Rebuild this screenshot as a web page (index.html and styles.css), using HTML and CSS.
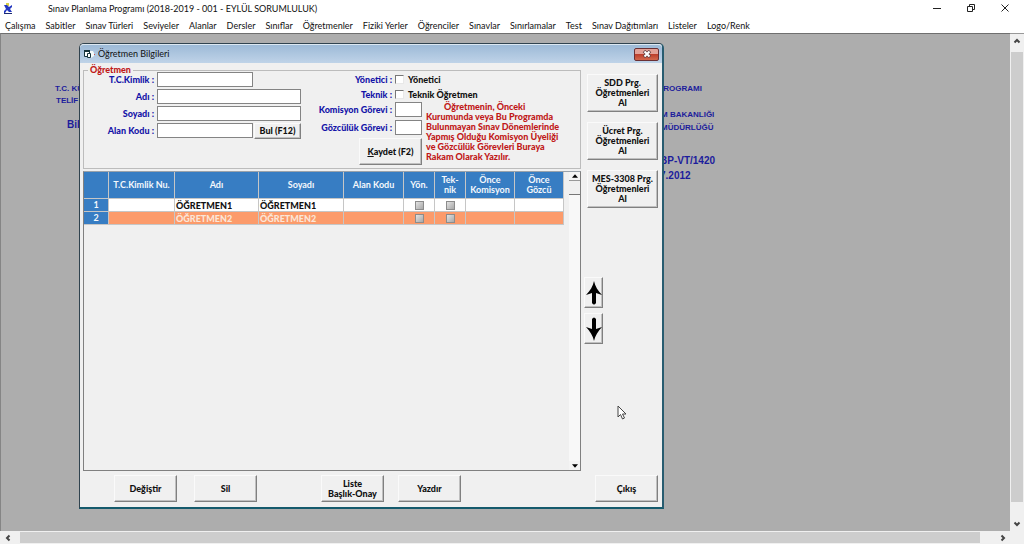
FILE: index.html
```html
<!DOCTYPE html>
<html lang="tr">
<head>
<meta charset="utf-8">
<title>Sınav Planlama Programı</title>
<link rel="stylesheet" href="styles.css">
</head>
<body>
<header class="titlebar">
  <svg class="app-icon" viewBox="0 0 10 12" aria-hidden="true"><path d="M3 0h3v3H3z" fill="#d8cf45"/><path d="M1 2h3l2 2 3-2v2L7 6l2 3H6L4 7 2 10H1V8l2-2z" fill="#2438c0"/><path d="M1 10h8v1H1z" fill="#1b2a70"/></svg>
  <h1 class="app-title">Sınav Planlama Programı (2018-2019 - 001 - EYLÜL SORUMLULUK)</h1>
  <div class="window-controls">
    <button aria-label="Simge durumuna küçült"><svg viewBox="0 0 10 10"><path d="M1 5.5h8"/></svg></button>
    <button aria-label="Önceki boyut"><svg viewBox="0 0 10 10"><path d="M1.5 3.5h5v5h-5zM3.5 3V1.5h5v5H7"/></svg></button>
    <button aria-label="Kapat"><svg viewBox="0 0 10 10"><path d="M1.5 1.5l7 7M8.500 1.500l-7 7"/></svg></button>
  </div>
</header>
<nav class="menu">
  <button>Çalışma</button><button>Sabitler</button><button>Sınav Türleri</button><button>Seviyeler</button><button>Alanlar</button><button>Dersler</button><button>Sınıflar</button><button>Öğretmenler</button><button>Fiziki Yerler</button><button>Öğrenciler</button><button>Sınavlar</button><button>Sınırlamalar</button><button>Test</button><button>Sınav Dağıtımları</button><button>Listeler</button><button>Logo/Renk</button>
</nav>
<main class="workspace">
  <div class="desktop">
    <p class="notice notice-culture">T.C. KÜ</p>
    <p class="notice notice-copyright">TELİF</p>
    <p class="notice notice-info">Bil</p>
    <p class="notice notice-program">PROGRAMI</p>
    <p class="notice notice-ministry">M BAKANLIĞI</p>
    <p class="notice notice-office">MÜDÜRLÜĞÜ</p>
    <p class="notice notice-code">BP-VT/1420</p>
    <p class="notice notice-date">7.2012</p>

    <section class="dialog" aria-labelledby="dialog-title">
      <header class="dialog-bar">
        <svg class="form-icon" viewBox="0 0 12 10" aria-hidden="true"><path d="M6 2l4 0 1 2v3l-3 2z" fill="#f4fafa"/><path d="M1.500 1.500h5v6h-5z" fill="#fff" stroke="#17343c"/><path d="M1 1h6v2H1z" fill="#17343c"/><path d="M4.500 4.500h3v4h-3z" fill="#fff" stroke="#17343c"/><path d="M11 5h1v1h-1z" fill="#c55"/></svg>
        <h2 class="dialog-title" id="dialog-title">Öğretmen Bilgileri</h2>
        <button class="dialog-close" aria-label="Kapat"><svg viewBox="0 0 10 8"><path d="M2 1l6 6M8 1L2 7" stroke="#644" stroke-width="3.500"/><path d="M2.500 1.500l5 5M7.500 1.500l-5 5" stroke="#fff" stroke-width="2"/></svg></button>
      </header>
      <div class="dialog-body">
        <div class="main-column">
          <fieldset class="teacher">
            <legend>Öğretmen</legend>
            <div class="identity">
              <label for="tc">T.C.Kimlik :</label><input class="text short" id="tc" type="text">
              <label for="adi">Adı :</label><input class="text" id="adi" type="text">
              <label for="soyadi">Soyadı :</label><input class="text" id="soyadi" type="text">
              <label for="alan">Alan Kodu :</label>
              <div class="lookup"><input class="text short" id="alan" type="text"><button class="raised find">Bul (F12)</button></div>
            </div>
            <div class="duties">
              <div class="flags">
                <span>Yönetici :</span><label class="flag"><input class="tick" type="checkbox">Yönetici</label>
                <span>Teknik :</span><label class="flag"><input class="tick" type="checkbox">Teknik Öğretmen</label>
              </div>
              <div class="tasks">
                <div class="task-fields">
                  <label for="komisyon">Komisyon Görevi :</label><input class="text tiny" id="komisyon" type="text">
                  <label for="gozcu">Gözcülük Görevi :</label><input class="text tiny" id="gozcu" type="text">
                  <button class="raised save"><span><u>K</u>aydet (F2)</span></button>
                </div>
                <p class="hint">Öğretmenin, Önceki<br>Kurumunda veya Bu Programda<br>Bulunmayan Sınav Dönemlerinde<br>Yapmış Olduğu Komisyon Üyeliği<br>ve Gözcülük Görevleri Buraya<br>Rakam Olarak Yazılır.</p>
              </div>
            </div>
          </fieldset>
          <div class="list">
            <div class="list-area">
              <table class="grid">
                <colgroup><col class="c-no"><col class="c-id"><col class="c-name"><col class="c-surname"><col class="c-code"><col class="c-tick"><col class="c-tick"><col class="c-past"><col class="c-past"></colgroup>
                <thead><tr><th></th><th>T.C.Kimlik Nu.</th><th>Adı</th><th>Soyadı</th><th>Alan Kodu</th><th>Yön.</th><th>Tek-<br>nik</th><th>Önce<br>Komisyon</th><th>Önce<br>Gözcü</th></tr></thead>
                <tbody>
                  <tr><th>1</th><td></td><td>ÖĞRETMEN1</td><td>ÖĞRETMEN1</td><td></td><td><input class="cell-tick" type="checkbox" aria-label="Yönetici"></td><td><input class="cell-tick" type="checkbox" aria-label="Teknik"></td><td></td><td></td></tr>
                  <tr class="selected"><th>2</th><td></td><td>ÖĞRETMEN2</td><td>ÖĞRETMEN2</td><td></td><td><input class="cell-tick" type="checkbox" aria-label="Yönetici"></td><td><input class="cell-tick" type="checkbox" aria-label="Teknik"></td><td></td><td></td></tr>
                </tbody>
              </table>
            </div>
            <div class="list-scroll">
              <button aria-label="Yukarı"><svg viewBox="0 0 7 4"><path d="M0 4l3.500-4L7 4z"/></svg></button>
              <div class="list-thumb"></div>
              <button class="list-down" aria-label="Aşağı"><svg viewBox="0 0 7 4"><path d="M0 0l3.500 4L7 0z"/></svg></button>
            </div>
          </div>
        </div>
        <aside class="side-column">
          <div class="imports">
            <button class="raised">SDD Prg.<br>Öğretmenleri<br>Al</button>
            <button class="raised">Ücret Prg.<br>Öğretmenleri<br>Al</button>
            <button class="raised">MES-3308 Prg.<br>Öğretmenleri<br>Al</button>
          </div>
          <div class="movers">
            <button class="raised" aria-label="Yukarı taşı"><svg viewBox="0 0 16 24"><path d="M8 0C9 5 12 10 16 14L10 12V22Q8 25 6 22V12L0 14C4 10 7 5 8 0z"/></svg></button>
            <button class="raised" aria-label="Aşağı taşı"><svg viewBox="0 0 16 24"><path d="M8 24C9 19 12 14 16 10L10 12V2Q8-1 6 2V12L0 10C4 14 7 19 8 24z"/></svg></button>
          </div>
        </aside>
      </div>
      <footer class="actions">
        <button class="raised">Değiştir</button>
        <button class="raised">Sil</button>
        <button class="raised report">Liste<br>Başlık-Onay</button>
        <button class="raised print">Yazdır</button>
        <button class="raised exit">Çıkış</button>
      </footer>
    </section>
    <svg class="pointer" viewBox="0 0 10 15" aria-hidden="true"><path d="M1 1v11l2.500-2.500L5.500 14l2-1L5.500 9H9z" fill="#fff" stroke="#444"/></svg>
  </div>
  <div class="vscroll">
    <button aria-label="Yukarı kaydır"><svg viewBox="0 0 8 8"><path d="M1.500 5.500L4 3l2.500 2.500"/></svg></button>
    <div class="vthumb"></div>
    <button aria-label="Aşağı kaydır"><svg viewBox="0 0 8 8"><path d="M1.500 2.500L4 5l2.500-2.500"/></svg></button>
  </div>
</main>
<div class="hscroll">
  <button aria-label="Sola kaydır"><svg viewBox="0 0 8 8"><path d="M5.500 1.500L3 4l2.500 2.500"/></svg></button>
  <div class="hthumb"></div>
  <button aria-label="Sağa kaydır"><svg viewBox="0 0 8 8"><path d="M2.500 1.500L5 4 2.500 6.500"/></svg></button>
</div>
</body>
</html>
```
FILE: styles.css
```css
* { box-sizing: border-box; }
body {
  margin: 0;
  height: 100vh;
  display: flex;
  flex-direction: column;
  overflow: hidden;
  background: #fff;
  color: #111;
  font-family: Lato, "Open Sans", sans-serif;
  font-size: 9px;
}
button, input { margin: 0; padding: 0; font: inherit; color: inherit; border-radius: 0; }
button { border: 0; background: none; }
h1, h2, p { margin: 0; }
h1, h2 { font-weight: 400; }
svg { display: block; }

.titlebar { display: flex; align-items: center; height: 17px; }
.app-icon { width: 10px; height: 12px; margin-left: 3px; }
.app-title { margin-left: 35px; font-size: 9px; line-height: 17px; }
.window-controls { display: flex; margin: 0 2px 2px auto; }
.window-controls button { width: 34px; height: 15px; display: grid; place-items: center; }
.window-controls svg { width: 10px; height: 10px; fill: none; stroke: #222; }

.menu { display: flex; gap: 10px; height: 16px; padding-left: 5px; }
.menu button { line-height: 15px; white-space: nowrap; }

.workspace { flex: 1; min-height: 0; display: flex; }
.desktop {
  position: relative;
  flex: 1;
  overflow: hidden;
  background: #adadad;
  border-top: 1px solid #6f6f6f;
  border-left: 1px solid #858585;
}
.notice {
  position: absolute;
  color: #1c1c9c;
  font: bold 8px/12px "Liberation Sans", Arial, sans-serif;
  white-space: nowrap;
}
.notice-culture { left: 54px; top: 49px; }
.notice-copyright { left: 55px; top: 61px; }
.notice-info { left: 66px; top: 85px; font-size: 10px; }
.notice-program { left: 657px; top: 49px; }
.notice-ministry { left: 660px; top: 75px; }
.notice-office { left: 660px; top: 88px; }
.notice-code { left: 659px; top: 121px; font-size: 10px; }
.notice-date { left: 659px; top: 136px; font-size: 10px; }

.dialog {
  position: absolute;
  left: 78px;
  top: 9px;
  width: 585px;
  display: flex;
  flex-direction: column;
  border: 1px solid #30434f;
  border-right: 2px solid #285c70;
  border-bottom: 2px solid #155a6c;
  border-radius: 5px 5px 0 0;
  background: #f0f0f0;
  font-family: Lato, "Open Sans", sans-serif;
  font-weight: 900;
  line-height: 10px;
}
.dialog-bar {
  display: flex;
  align-items: center;
  height: 19px;
  padding: 0 3px;
  border-top: 1px solid #dce8f2;
  border-radius: 4px 4px 0 0;
  background: linear-gradient(#9dbad7, #bfd3e8);
}
.form-icon { width: 12px; height: 10px; }
.dialog-title { margin-left: 3px; font: 9px/16px Lato, "Open Sans", sans-serif; }
.dialog-close {
  margin-left: auto;
  width: 25px;
  height: 13px;
  display: grid;
  place-items: center;
  border: 1px solid #6a3034;
  border-radius: 2px;
  background: linear-gradient(#e3a197 45%, #bd3f2c 50%, #d2684c);
}
.dialog-close svg { width: 10px; height: 8px; fill: none; }

.dialog-body { display: flex; padding: 3px 3px 0; }
.main-column { width: 498px; }

.teacher {
  margin: 0;
  padding: 0 0 0 2px;
  min-width: 0;
  height: 103px;
  display: flex;
  border: 1px solid #bcbcbc;
  color: #1414a8;
}
.teacher legend { margin-left: 2px; padding: 0 2px; height: 8px; line-height: 8px; color: #c01818; }
.identity {
  display: grid;
  grid-template-columns: 68px 144px;
  grid-template-rows: repeat(3, 15px) 16px;
  gap: 2px 3px;
  align-content: start;
  align-items: center;
  margin-top: -2px;
}
.identity label { text-align: right; }
.text { width: 100%; height: 15px; border: 1px solid #848484; background: #fff; padding: 0 2px; }
.short { width: 96px; }
.tiny { width: 27px; }
.lookup { display: flex; gap: 1px; }
.raised {
  border: 1px solid;
  border-color: #fafafa #808080 #808080 #fafafa;
  box-shadow: inset -1px -1px #c0c0c0;
  background: #f0f0f0;
  color: #111;
  text-align: center;
  line-height: 10px;
}
.find { width: 47px; height: 16px; white-space: nowrap; }
.duties { display: flex; flex-direction: column; margin: -2px 0 0 9px; }
.flags {
  display: grid;
  grid-template-columns: 82px auto;
  gap: 0 3px;
  line-height: 15px;
}
.flags span { text-align: right; }
.flag { display: flex; align-items: center; gap: 4px; color: #111; }
.tick {
  appearance: none;
  width: 9px;
  height: 9px;
  border: 1px solid;
  border-color: #777 #e8e8e8 #e8e8e8 #777;
  background: #fff;
}
.tasks { display: flex; }
.task-fields {
  display: grid;
  grid-template-columns: 82px 27px;
  grid-template-rows: 15px 15px 27px;
  gap: 3px;
  align-items: center;
  white-space: nowrap;
}
.task-fields label { text-align: right; }
.save { grid-column: 1 / 3; justify-self: end; width: 63px; height: 27px; }
.hint { margin-left: 4px; color: #c01818; text-indent: 18px; white-space: nowrap; }

.list {
  display: flex;
  height: 300px;
  margin-top: 2px;
  border: 1px solid #808080;
  border-top-color: #9aa2aa;
}
.list-area { flex: 1; }
.grid { border-collapse: separate; border-spacing: 0; table-layout: fixed; width: 480px; }
.c-no { width: 25px; }
.c-id { width: 66px; }
.c-name { width: 84px; }
.c-surname { width: 85px; }
.c-code { width: 60px; }
.c-tick { width: 31px; }
.c-past { width: 49px; }
.grid th, .grid td { padding: 0; border-right: 1px solid #c6c6c6; border-bottom: 1px solid #c6c6c6; overflow: hidden; white-space: nowrap; }
.grid th { background: #377dc3; color: #f4f8fc; line-height: 10px; }
.grid thead th { height: 27px; }
.grid tbody tr { height: 13px; }
.grid td { background: #fff; line-height: 11px; padding-left: 1px; }
.grid .selected td { background: #fc9b6b; color: #fbe6d8; }
.cell-tick {
  appearance: none;
  display: block;
  width: 9px;
  height: 9px;
  margin: 0 auto;
  border: 1px solid #8c8c8c;
  background: linear-gradient(135deg, #e2e2e2, #a8a8a8);
}
.list-scroll { width: 11px; display: flex; flex-direction: column; background: #f8f8f8; }
.list-scroll button { height: 9px; display: grid; place-items: center; background: #f4f4f4; border-bottom: 1px solid #999; }
.list-scroll svg { width: 6px; height: 4px; }
.list-thumb { height: 14px; background: #f0f0f0; border-bottom: 1px solid #777; }
.list-scroll .list-down { margin-top: auto; border: 0; }

.side-column { flex: 1; padding: 8px 0 0 3px; }
.imports { display: flex; flex-direction: column; gap: 10px; padding-left: 3px; }
.imports .raised { width: 71px; height: 38px; white-space: nowrap; }
.movers { display: flex; flex-direction: column; gap: 5px; margin-top: 69px; }
.movers .raised { width: 19px; height: 31px; display: grid; place-items: center; }
.movers svg { width: 16px; height: 24px; }

.actions { display: flex; gap: 17px; padding: 4px 4px 5px 34px; }
.actions .raised { width: 63px; height: 27px; white-space: nowrap; }
.actions .report { margin-left: 47px; }
.actions .print { margin-left: -3px; }
.actions .exit { margin-left: auto; }

.pointer { position: absolute; left: 616px; top: 371px; width: 10px; height: 15px; }

.vscroll { width: 14px; display: flex; flex-direction: column; background: #f0f0f0; border-top: 1px solid #999; }
.vscroll button, .hscroll button { display: grid; place-items: center; flex: none; }
.vscroll button { height: 14px; }
.vthumb { flex: 1; margin: 4px 1px 15px; background: #cdcdcd; }
.vscroll svg, .hscroll svg { width: 8px; height: 8px; fill: none; stroke: #444; stroke-width: 2; }
.hscroll { display: flex; height: 13px; background: #f0f0f0; }
.hscroll button { width: 15px; }
.hscroll button:last-child { margin-right: 14px; }
.hthumb { flex: 1; margin: 1px 15px 1px 5px; background: #cdcdcd; }
```
